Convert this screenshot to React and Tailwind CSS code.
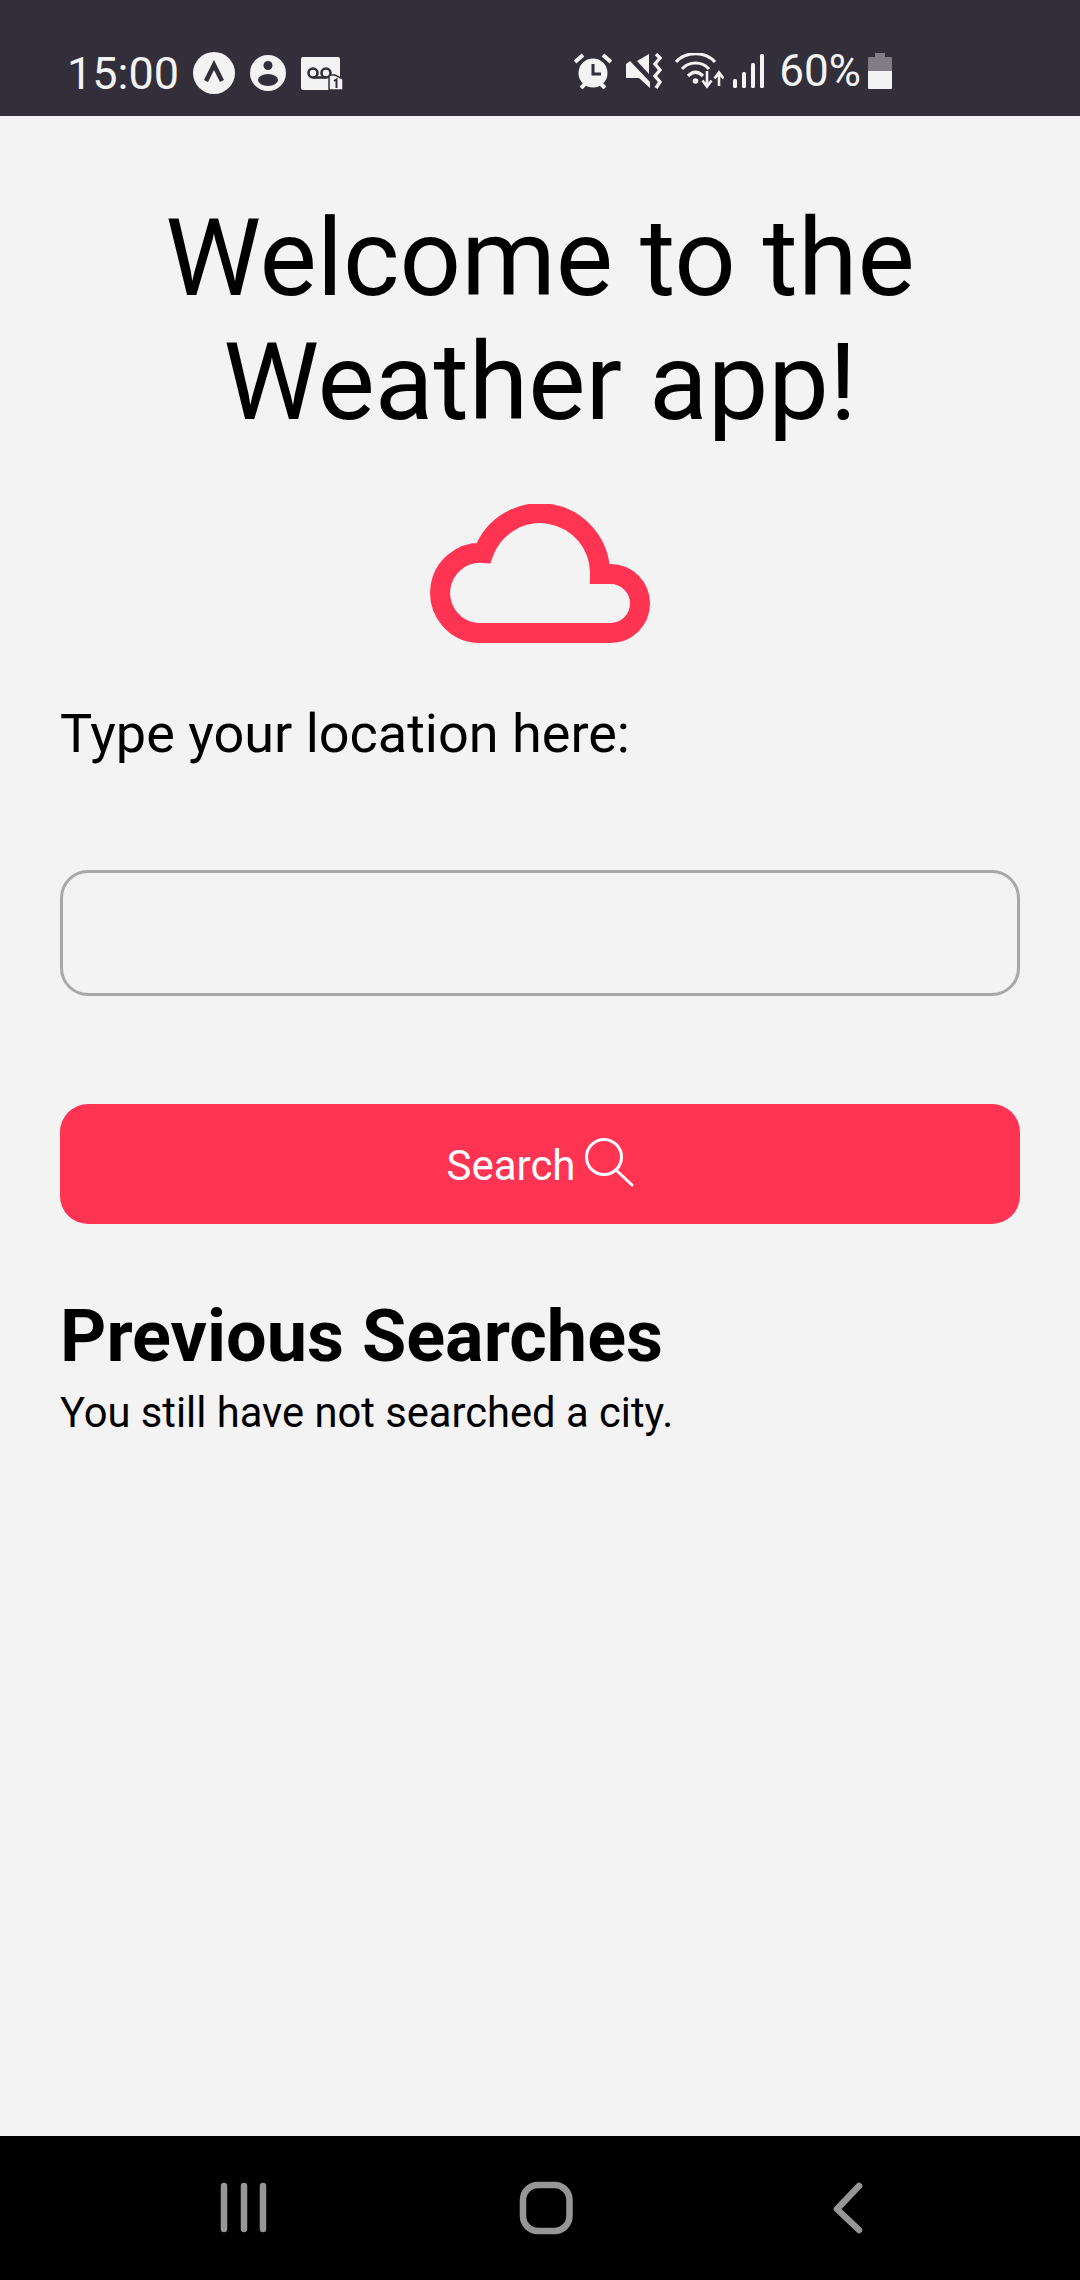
const RED = '#ff3352'

function StatusLeft() {
  return (
    <div className="flex items-center mt-[4px]">
      <span className="text-[45px] leading-none text-[#f3f3f3] w-[126px] ml-[67px]">15:00</span>
      <svg width="42" height="42" viewBox="0 0 42 42">
        <circle cx="21" cy="21" r="21" fill="#f3f3f3" />
        <path d="M13 29 L21 13 L29 29" fill="none" stroke="#322f3a" strokeWidth="4.5" />
      </svg>
      <svg width="36" height="36" viewBox="0 0 36 36" className="ml-[15px]">
        <circle cx="18" cy="18" r="18" fill="#f3f3f3" />
        <circle cx="18" cy="10.5" r="4.5" fill="#322f3a" />
        <ellipse cx="18" cy="25" rx="10" ry="6" fill="#322f3a" />
      </svg>
      <svg width="42" height="33" viewBox="0 0 42 33" className="ml-[15px]">
        <rect x="0" y="0" width="39" height="33" rx="2" fill="#f3f3f3" />
        <circle cx="12" cy="16" r="4.5" fill="none" stroke="#322f3a" strokeWidth="2.6" />
        <circle cx="25" cy="16" r="4.5" fill="none" stroke="#322f3a" strokeWidth="2.6" />
        <path d="M12 20.5 H25" stroke="#322f3a" strokeWidth="2.6" />
        <path d="M28 33 V20 A2 2 0 0 1 30 18 H34 L42 22 V33 Z" fill="#f3f3f3" stroke="#322f3a" strokeWidth="1.5" />
        <path d="M33 24 L35.5 22.5 V31" fill="none" stroke="#322f3a" strokeWidth="2" />
      </svg>
    </div>
  )
}

function StatusRight() {
  return (
    <div className="flex items-center">
      <svg width="38" height="36" viewBox="0 0 38 36">
        <circle cx="19" cy="20" r="14.5" fill="#f3f3f3" />
        <path d="M19 11 V21 H27" fill="none" stroke="#322f3a" strokeWidth="3" />
        <path d="M1 9 L9 2 M37 9 L29 2 M7 35 L11 31 M31 35 L27 31" stroke="#f3f3f3" strokeWidth="4" />
      </svg>
      <svg width="36" height="36" viewBox="0 0 36 36" className="ml-[14px]">
        <path d="M0 11 L4 8 L24 29 V35 L13 25 H0 Z" fill="#f3f3f3" />
        <path d="M11 8 L23 1 V21 Z" fill="#f3f3f3" />
        <path d="M30 1 L34 5 L29 11 L34 17 L29 23 L34 29 L30 35" fill="none" stroke="#f3f3f3" strokeWidth="3.4" />
      </svg>
      <svg width="49" height="36" viewBox="0 0 49 36" className="ml-[13px]">
        <path d="M1 9 C11 -2 30 -2 40 9 M7 16 C14 8 27 8 34 16 M13 23 C18 18 23 18 28 23" fill="none" stroke="#f3f3f3" strokeWidth="3.2" />
        <circle cx="20.5" cy="28" r="2.8" fill="#f3f3f3" />
        <path d="M32 18 V33 M27.5 27.5 L32 33.5 L36.5 27.5 M44 33 V20 M39.5 25.5 L44 19.5 L48.5 25.5" fill="none" stroke="#f3f3f3" strokeWidth="2.6" />
      </svg>
      <svg width="31" height="36" viewBox="0 0 31 36" className="ml-[9px]">
        <rect x="0" y="26" width="4" height="9" rx="1.5" fill="#f3f3f3" />
        <rect x="9" y="19" width="4" height="16" rx="1.5" fill="#f3f3f3" />
        <rect x="18" y="10" width="4" height="25" rx="1.5" fill="#f3f3f3" />
        <rect x="27" y="1" width="4" height="34" rx="1.5" fill="#f3f3f3" />
      </svg>
      <span className="text-[44px] leading-none text-[#f3f3f3] ml-[15px] mr-[7px]">60%</span>
      <svg width="24" height="36" viewBox="0 0 24 36">
        <path d="M7 0 H17 V4 H23 A1 1 0 0 1 24 5 V18 H0 V5 A1 1 0 0 1 1 4 H7 Z" fill="#807d87" />
        <path d="M0 18 H24 V35 A1 1 0 0 1 23 36 H1 A1 1 0 0 1 0 35 Z" fill="#f3f3f3" />
      </svg>
    </div>
  )
}

export default function App() {
  return (
    <div className="w-[1080px] h-[2280px] flex flex-col bg-[#f3f3f3] font-['Roboto',sans-serif] overflow-hidden">
      <div className="h-[116px] shrink-0 bg-[#322f3a] flex items-center justify-between pr-[188px] pt-[26px]">
        <StatusLeft />
        <StatusRight />
      </div>

      <div className="flex-1 px-[60px]">
        <h1 className="mt-[80px] text-center text-[108px] leading-[124px] text-black">
          Welcome to the
          <br />
          Weather app!
        </h1>
        <div className="flex justify-center mt-[60px]">
          <svg width="220" height="140" viewBox="0 0 220 140">
            <path
              d="M47 129 H180.5 A29.5 29.5 0 0 0 180.5 70 H170 A60 60 0 0 0 53.5 49 A40 40 0 1 0 47 129 Z"
              fill="none"
              stroke={RED}
              strokeWidth="20"
            />
          </svg>
        </div>
        <p className="mt-[60px] text-[54px] leading-[60px] text-black">Type your location here:</p>
        <div className="mt-[106px] h-[126px] rounded-[28px] border-[3px] border-[#a8a8a8]" />
        <button className="mt-[108px] w-full h-[120px] rounded-[28px] bg-[#ff3352] flex items-center justify-center text-white text-[42px]">
          <span className="mt-[2px]">Search</span>
          <svg width="50" height="50" viewBox="0 0 50 50" className="ml-[8px] mb-[4px]">
            <circle cx="20" cy="20" r="17.5" fill="none" stroke="#fff" strokeWidth="3" />
            <path d="M32 33 L48 48" fill="none" stroke="#fff" strokeWidth="3" strokeLinecap="round" />
          </svg>
        </button>
        <h2 className="mt-[71px] text-[72px] leading-[84px] font-bold text-black">Previous Searches</h2>
        <p className="mt-[9px] text-[41.7px] leading-[50px] text-black">You still have not searched a city.</p>
      </div>

      <div className="h-[144px] shrink-0 bg-black relative">
        <svg width="720" height="144" viewBox="0 0 720 144" className="absolute left-[180px] top-0">
          <path d="M44 50 V93 M64 50 V93 M83 50 V93" stroke="#969696" strokeWidth="6.5" strokeLinecap="round" />
          <rect x="343" y="49" width="46.5" height="46" rx="15" fill="none" stroke="#969696" strokeWidth="6.5" />
          <path d="M679 50 L657 73 L679 94" fill="none" stroke="#969696" strokeWidth="6.5" strokeLinecap="round" strokeLinejoin="round" />
        </svg>
      </div>
    </div>
  )
}
